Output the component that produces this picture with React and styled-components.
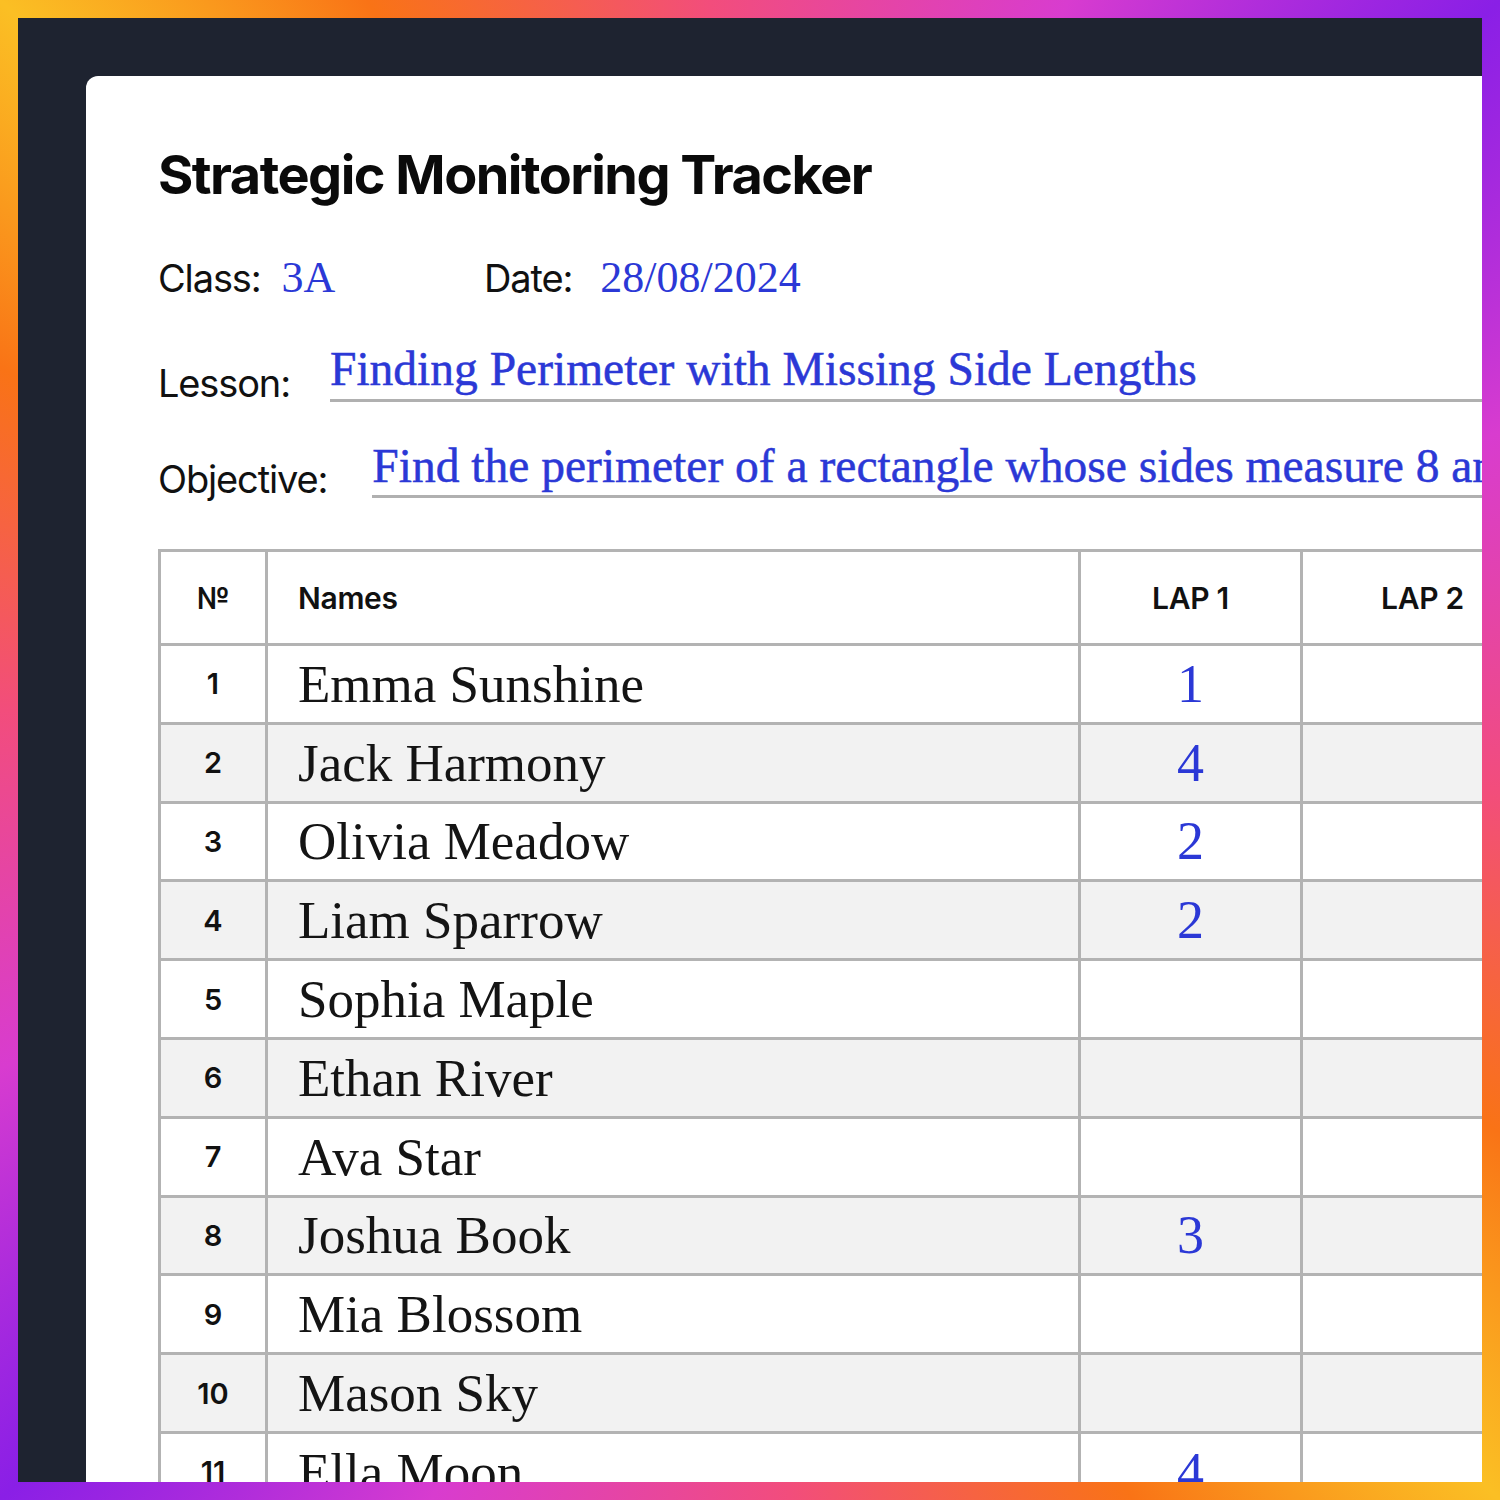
import React from "react"
import styled, { createGlobalStyle } from "styled-components"

const GlobalStyle = createGlobalStyle`
  html, body {
    margin: 0;
    padding: 0;
    overflow: hidden;
  }
  * {
    box-sizing: border-box;
  }
`

const Frame = styled.div`
  width: 1500px;
  height: 1500px;
  padding: 18px;
  background: conic-gradient(
    from -45deg at 50% 50%,
    #fbbf24 0deg,
    #f97316 18deg,
    #f24d7c 42deg,
    #d83ccf 68deg,
    #8a1fe6 90deg,
    #d83ccf 112deg,
    #f24d7c 138deg,
    #f97316 162deg,
    #fbbf24 180deg,
    #f97316 198deg,
    #f24d7c 222deg,
    #d83ccf 248deg,
    #8a1fe6 270deg,
    #d83ccf 292deg,
    #f24d7c 318deg,
    #f97316 342deg,
    #fbbf24 360deg
  );
`

const Stage = styled.div`
  width: 100%;
  height: 100%;
  background: #1e2330;
  padding: 58px 0 0 68px;
  overflow: hidden;
  display: flex;
  align-items: flex-start;
`

const Sheet = styled.div`
  flex: none;
  width: 1720px;
  min-height: 1600px;
  background: #fff;
  border-radius: 12px 0 0 0;
  padding: 72px 0 0 72px;
  display: flex;
  flex-direction: column;
`

const Title = styled.h1`
  margin: 0;
  font-family: Inter, "Liberation Sans", sans-serif;
  font-weight: 700;
  font-size: 54px;
  line-height: 54px;
  letter-spacing: -0.028em;
  color: #0a0a0a;
`

const MetaRow = styled.div`
  display: flex;
  align-items: baseline;
  margin-top: ${(p) => p.$top}px;
`

const Field = styled.div`
  display: flex;
  align-items: ${(p) => (p.$line ? "flex-end" : "baseline")};
  gap: ${(p) => p.$gap}px;
  width: ${(p) => (p.$width ? `${p.$width}px` : "auto")};
  flex: ${(p) => (p.$line ? "1" : "none")};
  min-width: 0;
`

const Label = styled.span`
  font-family: Inter, "Liberation Sans", sans-serif;
  font-size: 38px;
  line-height: 1;
  letter-spacing: -0.03em;
  color: #111;
  white-space: nowrap;
`

const Value = styled.span`
  font-family: "Liberation Serif", "DejaVu Serif", serif;
  font-size: ${(p) => p.$size}px;
  line-height: 1;
  color: #2b38d6;
  white-space: nowrap;
`

const LineValue = styled(Value)`
  flex: 1;
  min-width: 0;
  padding-bottom: 5px;
  border-bottom: 3px solid #b0b0b0;
  -webkit-text-stroke: 0.5px #2b38d6;
`

const Table = styled.table`
  margin-top: 51px;
  border-collapse: collapse;
  table-layout: fixed;
  width: ${107 + 813 + 222 + 242 + 242}px;
  border: 3px solid #b3b3b3;
`

const HeadCell = styled.th`
  height: 94px;
  padding: 0 ${(p) => (p.$left ? "30px" : "0")};
  border: 3px solid #b3b3b3;
  text-align: ${(p) => (p.$left ? "left" : "center")};
  font-family: Inter, "Liberation Sans", sans-serif;
  font-weight: 600;
  font-size: 30px;
  letter-spacing: -0.01em;
  color: #111;
`

const Row = styled.tr`
  background: ${(p) => (p.$shade ? "#f2f2f2" : "#fff")};
`

const NumCell = styled.td`
  height: 78.8px;
  padding: 0;
  border: 3px solid #b3b3b3;
  text-align: center;
  font-family: Inter, "Liberation Sans", sans-serif;
  font-weight: 600;
  font-size: 29px;
  color: #111;
`

const NameCell = styled.td`
  padding: 0 0 0 30px;
  border: 3px solid #b3b3b3;
  font-family: "Liberation Serif", "DejaVu Serif", serif;
  font-size: 53px;
  color: #141414;
  white-space: nowrap;
`

const LapCell = styled.td`
  padding: 0;
  border: 3px solid #b3b3b3;
  text-align: center;
  font-family: "Liberation Serif", "DejaVu Serif", serif;
  font-size: 54px;
  color: #2b38d6;
`

const students = [
  { name: "Emma Sunshine", lap: "1" },
  { name: "Jack Harmony", lap: "4" },
  { name: "Olivia Meadow", lap: "2" },
  { name: "Liam Sparrow", lap: "2" },
  { name: "Sophia Maple", lap: "" },
  { name: "Ethan River", lap: "" },
  { name: "Ava Star", lap: "" },
  { name: "Joshua Book", lap: "3" },
  { name: "Mia Blossom", lap: "" },
  { name: "Mason Sky", lap: "" },
  { name: "Ella Moon", lap: "4" },
  { name: "Noah Brook", lap: "" },
]

export default function App() {
  return (
    <Frame>
      <GlobalStyle />
      <Stage>
        <Sheet>
          <Title>Strategic Monitoring Tracker</Title>

          <MetaRow $top={54}>
            <Field $gap={21} $width={326}>
              <Label>Class:</Label>
              <Value $size={44}>3A</Value>
            </Field>
            <Field $gap={28}>
              <Label>Date:</Label>
              <Value $size={44}>28/08/2024</Value>
            </Field>
          </MetaRow>

          <MetaRow $top={46}>
            <Field $gap={40} $line>
              <Label>Lesson:</Label>
              <LineValue $size={47.5}>
                Finding Perimeter with Missing Side Lengths
              </LineValue>
            </Field>
          </MetaRow>

          <MetaRow $top={41}>
            <Field $gap={45} $line>
              <Label>Objective:</Label>
              <LineValue $size={47.5}>
                Find the perimeter of a rectangle whose sides measure 8 and 5 cm
              </LineValue>
            </Field>
          </MetaRow>

          <Table>
            <colgroup>
              <col style={{ width: 107 }} />
              <col style={{ width: 813 }} />
              <col style={{ width: 222 }} />
              <col style={{ width: 242 }} />
              <col style={{ width: 242 }} />
            </colgroup>
            <thead>
              <tr>
                <HeadCell>№</HeadCell>
                <HeadCell $left>Names</HeadCell>
                <HeadCell>LAP 1</HeadCell>
                <HeadCell>LAP 2</HeadCell>
                <HeadCell>LAP 3</HeadCell>
              </tr>
            </thead>
            <tbody>
              {students.map((s, i) => (
                <Row key={s.name} $shade={i % 2 === 1}>
                  <NumCell>{i + 1}</NumCell>
                  <NameCell>{s.name}</NameCell>
                  <LapCell>{s.lap}</LapCell>
                  <LapCell />
                  <LapCell />
                </Row>
              ))}
            </tbody>
          </Table>
        </Sheet>
      </Stage>
    </Frame>
  )
}
